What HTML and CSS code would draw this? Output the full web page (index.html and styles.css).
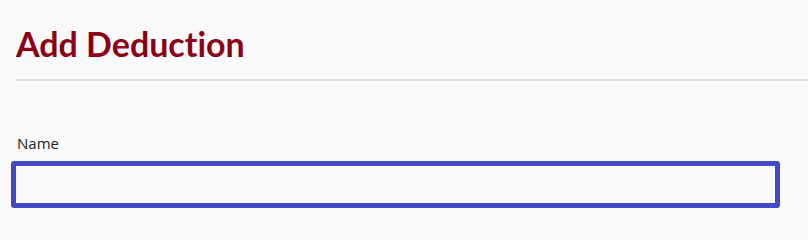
FILE: index.html
```html
<!DOCTYPE html>
<html>
<head>
<meta charset="utf-8">
<link rel="stylesheet" href="styles.css">
</head>
<body>
<div class="page">
  <h1 class="title">Add Deduction</h1>
  <div class="rule"></div>
  <form class="form">
    <label class="label" for="name">Name</label>
    <input class="input" id="name" type="text">
  </form>
</div>
</body>
</html>
```
FILE: styles.css
```css
html, body {
  margin: 0;
  padding: 0;
  background: #fafafa;
}
.page {
  font-family: Lato, "Open Sans", sans-serif;
  padding-top: 24px;
}
.title {
  margin: 0 0 0 16px;
  font-size: 34px;
  line-height: 40px;
  font-weight: 700;
  color: #8c0016;
  font-variant-ligatures: none;
}
.rule {
  margin: 15px 0 0 16px;
  height: 2px;
  background: #e4e4e4;
}
.form {
  display: flex;
  flex-direction: column;
  align-items: flex-start;
  padding-top: 54px;
}
.label {
  margin-left: 17px;
  font-family: "Open Sans", sans-serif;
  font-size: 15px;
  line-height: 17px;
  font-weight: 400;
  color: #222;
}
.input {
  box-sizing: border-box;
  margin: 9px 0 0 11px;
  width: 769px;
  height: 47px;
  border: 5px solid #4349c9;
  border-radius: 3px;
  background: #fafafa;
  outline: none;
  padding: 0 10px;
  font-family: Lato, sans-serif;
  font-size: 14px;
}
```
